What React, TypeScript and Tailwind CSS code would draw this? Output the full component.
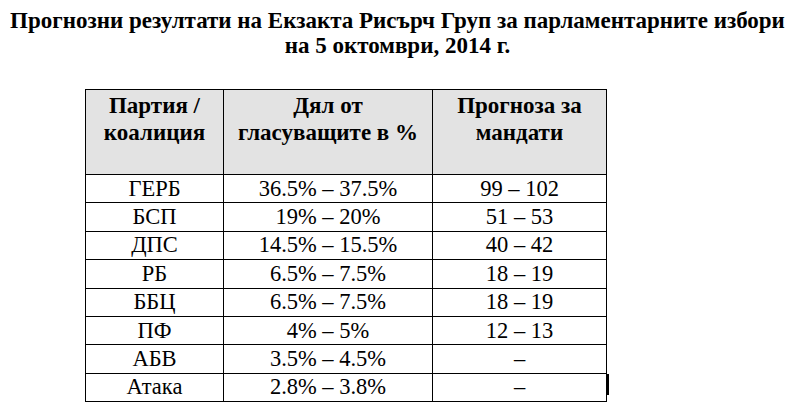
const rows = [
  ["ГЕРБ", "36.5% – 37.5%", "99 – 102"],
  ["БСП", "19% – 20%", "51 – 53"],
  ["ДПС", "14.5% – 15.5%", "40 – 42"],
  ["РБ", "6.5% – 7.5%", "18 – 19"],
  ["ББЦ", "6.5% – 7.5%", "18 – 19"],
  ["ПФ", "4% – 5%", "12 – 13"],
  ["АБВ", "3.5% – 4.5%", "–"],
  ["Атака", "2.8% – 3.8%", "–"],
];

export default function App() {
  return (
    <div className="w-[803px] h-[420px] bg-white text-black font-['Liberation_Serif','Times_New_Roman',serif] overflow-hidden">
      <h1 className="pt-[8px] w-[795px] text-center font-bold text-[23px] leading-[25px]">
        Прогнозни резултати на Екзакта Рисърч Груп за парламентарните избори
        <br />
        на 5 октомври, 2014 г.
      </h1>
      <div className="relative ml-[85px] mt-[31px] w-[521px]">
        <table className="border-collapse w-[521px] table-fixed">
          <colgroup>
            <col className="w-[138px]" />
            <col className="w-[209px]" />
            <col className="w-[174px]" />
          </colgroup>
          <thead>
            <tr className="h-[85px] bg-[#e3e3e3]">
              <th className="border border-black align-top pt-[2px] font-bold text-[23px] leading-[27px]">
                Партия /<br />коалиция
              </th>
              <th className="border border-black align-top pt-[2px] font-bold text-[23px] leading-[27px]">
                Дял от<br />гласуващите в %
              </th>
              <th className="border border-black align-top pt-[2px] font-bold text-[23px] leading-[27px]">
                Прогноза за<br />мандати
              </th>
            </tr>
          </thead>
          <tbody>
            {rows.map((r) => (
              <tr key={r[0]} className="h-[28.4px]">
                {r.map((c, i) => (
                  <td key={i} className="border border-black text-center align-middle text-[22.5px] leading-[24px] p-0">
                    {c}
                  </td>
                ))}
              </tr>
            ))}
          </tbody>
        </table>
        <div className="absolute left-[522px] top-[285px] w-[2px] h-[21px] bg-black" />
      </div>
    </div>
  );
}
